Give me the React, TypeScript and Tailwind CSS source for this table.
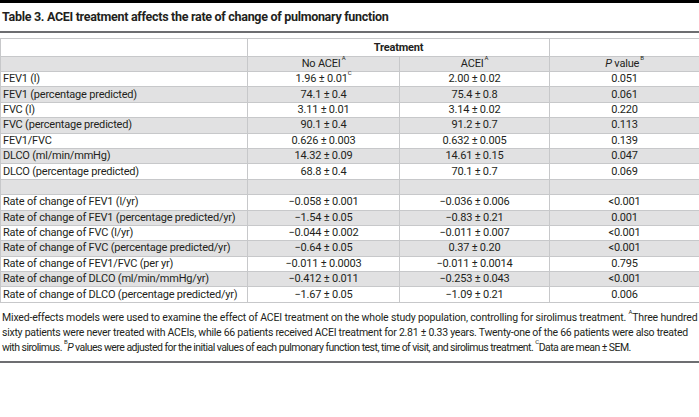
import React from "react";

type Row = { label: string; a: React.ReactNode; b: string; p: string; blank?: boolean };

const sup = "text-[6px] align-[4px] ml-[1px]";

const rows: Row[] = [
  { label: "FEV1 (l)", a: <>1.96 ± 0.01<sup className="text-[6px] align-[4px]">C</sup></>, b: "2.00 ± 0.02", p: "0.051" },
  { label: "FEV1 (percentage predicted)", a: "74.1 ± 0.4", b: "75.4 ± 0.8", p: "0.061" },
  { label: "FVC (l)", a: "3.11 ± 0.01", b: "3.14 ± 0.02", p: "0.220" },
  { label: "FVC (percentage predicted)", a: "90.1 ± 0.4", b: "91.2 ± 0.7", p: "0.113" },
  { label: "FEV1/FVC", a: "0.626 ± 0.003", b: "0.632 ± 0.005", p: "0.139" },
  { label: "DLCO (ml/min/mmHg)", a: "14.32 ± 0.09", b: "14.61 ± 0.15", p: "0.047" },
  { label: "DLCO (percentage predicted)", a: "68.8 ± 0.4", b: "70.1 ± 0.7", p: "0.069" },
  { label: "", a: "", b: "", p: "", blank: true },
  { label: "Rate of change of FEV1 (l/yr)", a: "−0.058 ± 0.001", b: "−0.036 ± 0.006", p: "<0.001" },
  { label: "Rate of change of FEV1 (percentage predicted/yr)", a: "−1.54 ± 0.05", b: "−0.83 ± 0.21", p: "0.001" },
  { label: "Rate of change of FVC (l/yr)", a: "−0.044 ± 0.002", b: "−0.011 ± 0.007", p: "<0.001" },
  { label: "Rate of change of FVC (percentage predicted/yr)", a: "−0.64 ± 0.05", b: "0.37 ± 0.20", p: "<0.001" },
  { label: "Rate of change of FEV1/FVC (per yr)", a: "−0.011 ± 0.0003", b: "−0.011 ± 0.0014", p: "0.795" },
  { label: "Rate of change of DLCO (ml/min/mmHg/yr)", a: "−0.412 ± 0.011", b: "−0.253 ± 0.043", p: "<0.001" },
  { label: "Rate of change of DLCO (percentage predicted/yr)", a: "−1.67 ± 0.05", b: "−1.09 ± 0.21", p: "0.006" },
];

const cell = "border border-[#c7c8ca]";

export default function App() {
  return (
    <div className="w-[699px] h-[417px] bg-white text-[#231f20] overflow-hidden" style={{ fontFamily: "Roboto, 'Open Sans', sans-serif" }}>
      <div className="h-[3px] bg-black" />
      <div className="h-[30px] flex items-center pl-[2px] pt-[1px] text-[12.5px] font-bold tracking-[-0.3px] border-b-2 border-[#6d6e71] whitespace-nowrap">
        Table 3. ACEI treatment affects the rate of change of pulmonary function
      </div>
      <div className="pt-[5px]">
        <table className="w-[699px] border-collapse table-fixed text-[11px] leading-[14px] tracking-[-0.2px]">
          <colgroup>
            <col className="w-[247px]" />
            <col className="w-[152px]" />
            <col className="w-[150px]" />
            <col className="w-[150px]" />
          </colgroup>
          <tbody>
            <tr className="h-[18px]">
              <td className={cell} />
              <td colSpan={2} className={`${cell} text-center font-bold`}>Treatment</td>
              <td className={cell} />
            </tr>
            <tr className="h-[15px] bg-[#e1e1e2]">
              <td className={cell} />
              <td className={`${cell} text-center`}>No ACEI<sup className={sup}>A</sup></td>
              <td className={`${cell} text-center`}>ACEI<sup className={sup}>A</sup></td>
              <td className={`${cell} text-center`}><i>P</i> value<sup className={sup}>B</sup></td>
            </tr>
            {rows.map((r, i) => (
              <tr key={i} className={`h-[15.4px] ${i % 2 === 1 ? "bg-[#e1e1e2]" : "bg-white"}`}>
                <td className={`${cell} pl-[2px] whitespace-nowrap`}>{r.label}</td>
                <td className={`${cell} text-center whitespace-nowrap`}>{r.a}</td>
                <td className={`${cell} text-center whitespace-nowrap`}>{r.b}</td>
                <td className={`${cell} text-center whitespace-nowrap`}>{r.p}</td>
              </tr>
            ))}
          </tbody>
        </table>
      </div>
      <div className="pt-[7px] pb-[6px] pl-[2px] text-[10.5px] leading-[15px] border-b-2 border-[#6d6e71] whitespace-nowrap">
        <div className="tracking-[-0.17px]">
          Mixed-effects models were used to examine the effect of ACEI treatment on the whole study population, controlling for sirolimus treatment. <sup className="text-[6px] align-[4px]">A</sup>Three hundred
        </div>
        <div className="tracking-[-0.26px]">
          sixty patients were never treated with ACEIs, while 66 patients received ACEI treatment for 2.81 ± 0.33 years. Twenty-one of the 66 patients were also treated
        </div>
        <div className="tracking-[-0.54px]">
          with sirolimus. <sup className="text-[6px] align-[4px]">B</sup><i>P</i> values were adjusted for the initial values of each pulmonary function test, time of visit, and sirolimus treatment. <sup className="text-[6px] align-[4px]">C</sup>Data are mean ± SEM.
        </div>
      </div>
    </div>
  );
}
